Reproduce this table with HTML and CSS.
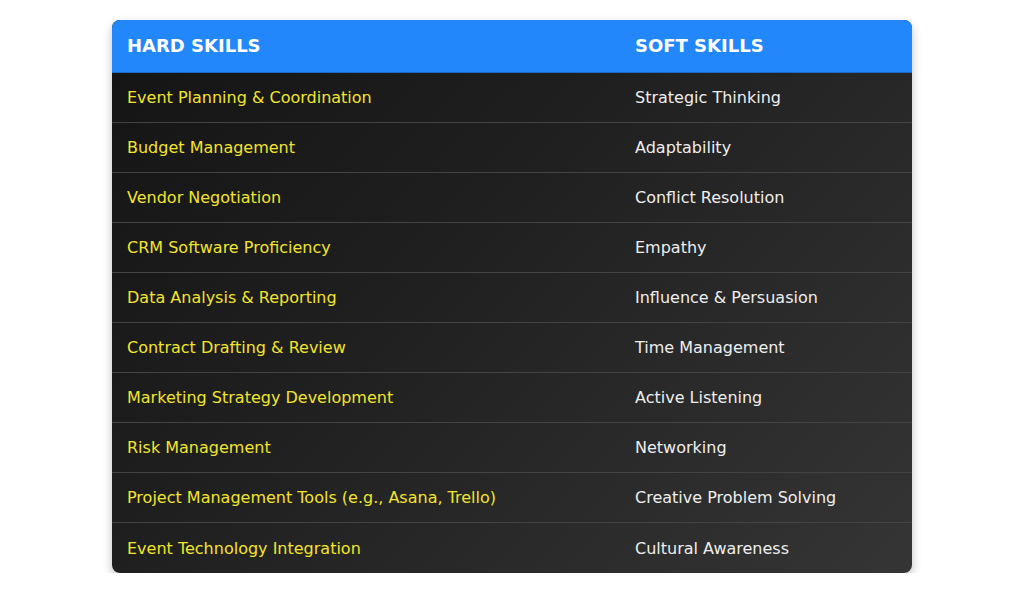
FILE: index.html
```html
<!DOCTYPE html>
<html>
<head>
<meta charset="utf-8">
<link rel="stylesheet" href="styles.css">
</head>
<body>
<div class="page">
<table class="skills">
<thead>
<tr><th class="col-hard">Hard Skills</th><th class="col-soft">Soft Skills</th></tr>
</thead>
<tbody>
<tr><td class="hard">Event Planning &amp; Coordination</td><td class="soft">Strategic Thinking</td></tr>
<tr><td class="hard">Budget Management</td><td class="soft">Adaptability</td></tr>
<tr><td class="hard">Vendor Negotiation</td><td class="soft">Conflict Resolution</td></tr>
<tr><td class="hard">CRM Software Proficiency</td><td class="soft">Empathy</td></tr>
<tr><td class="hard">Data Analysis &amp; Reporting</td><td class="soft">Influence &amp; Persuasion</td></tr>
<tr><td class="hard">Contract Drafting &amp; Review</td><td class="soft">Time Management</td></tr>
<tr><td class="hard">Marketing Strategy Development</td><td class="soft">Active Listening</td></tr>
<tr><td class="hard">Risk Management</td><td class="soft">Networking</td></tr>
<tr><td class="hard">Project Management Tools (e.g., Asana, Trello)</td><td class="soft">Creative Problem Solving</td></tr>
<tr><td class="hard">Event Technology Integration</td><td class="soft">Cultural Awareness</td></tr>
</tbody>
</table>
</div>
</body>
</html>
```
FILE: styles.css
```css
html, body {
  margin: 0;
  padding: 0;
  background: #ffffff;
}
body {
  font-family: "DejaVu Sans", sans-serif;
}
.page {
  padding-top: 20px;
  display: flex;
  justify-content: center;
}
.skills {
  width: 800px;
  border-collapse: separate;
  border-spacing: 0;
  border-radius: 8px;
  overflow: hidden;
  background: linear-gradient(135deg, #141414 0%, #1f1f1f 40%, #353535 100%);
  box-shadow: 0 4px 10px rgba(0, 0, 0, 0.25);
}
.skills th {
  background: #2187fb;
  color: #ffffff;
  font-size: 18px;
  font-weight: bold;
  text-transform: uppercase;
  text-align: left;
  height: 53px;
  padding: 0 15px 2px;
  box-sizing: border-box;
  border-bottom: 1px solid #1b6cc8;
}
.skills .col-hard {
  width: 508px;
}
.skills td {
  height: 50px;
  padding: 0 15px;
  box-sizing: border-box;
  font-size: 16px;
  border-bottom: 1px solid #444444;
}
.skills tbody tr:last-child td {
  border-bottom: none;
}
.skills td.hard {
  color: #f2e42c;
}
.skills td.soft {
  color: #eeeeee;
}
```
